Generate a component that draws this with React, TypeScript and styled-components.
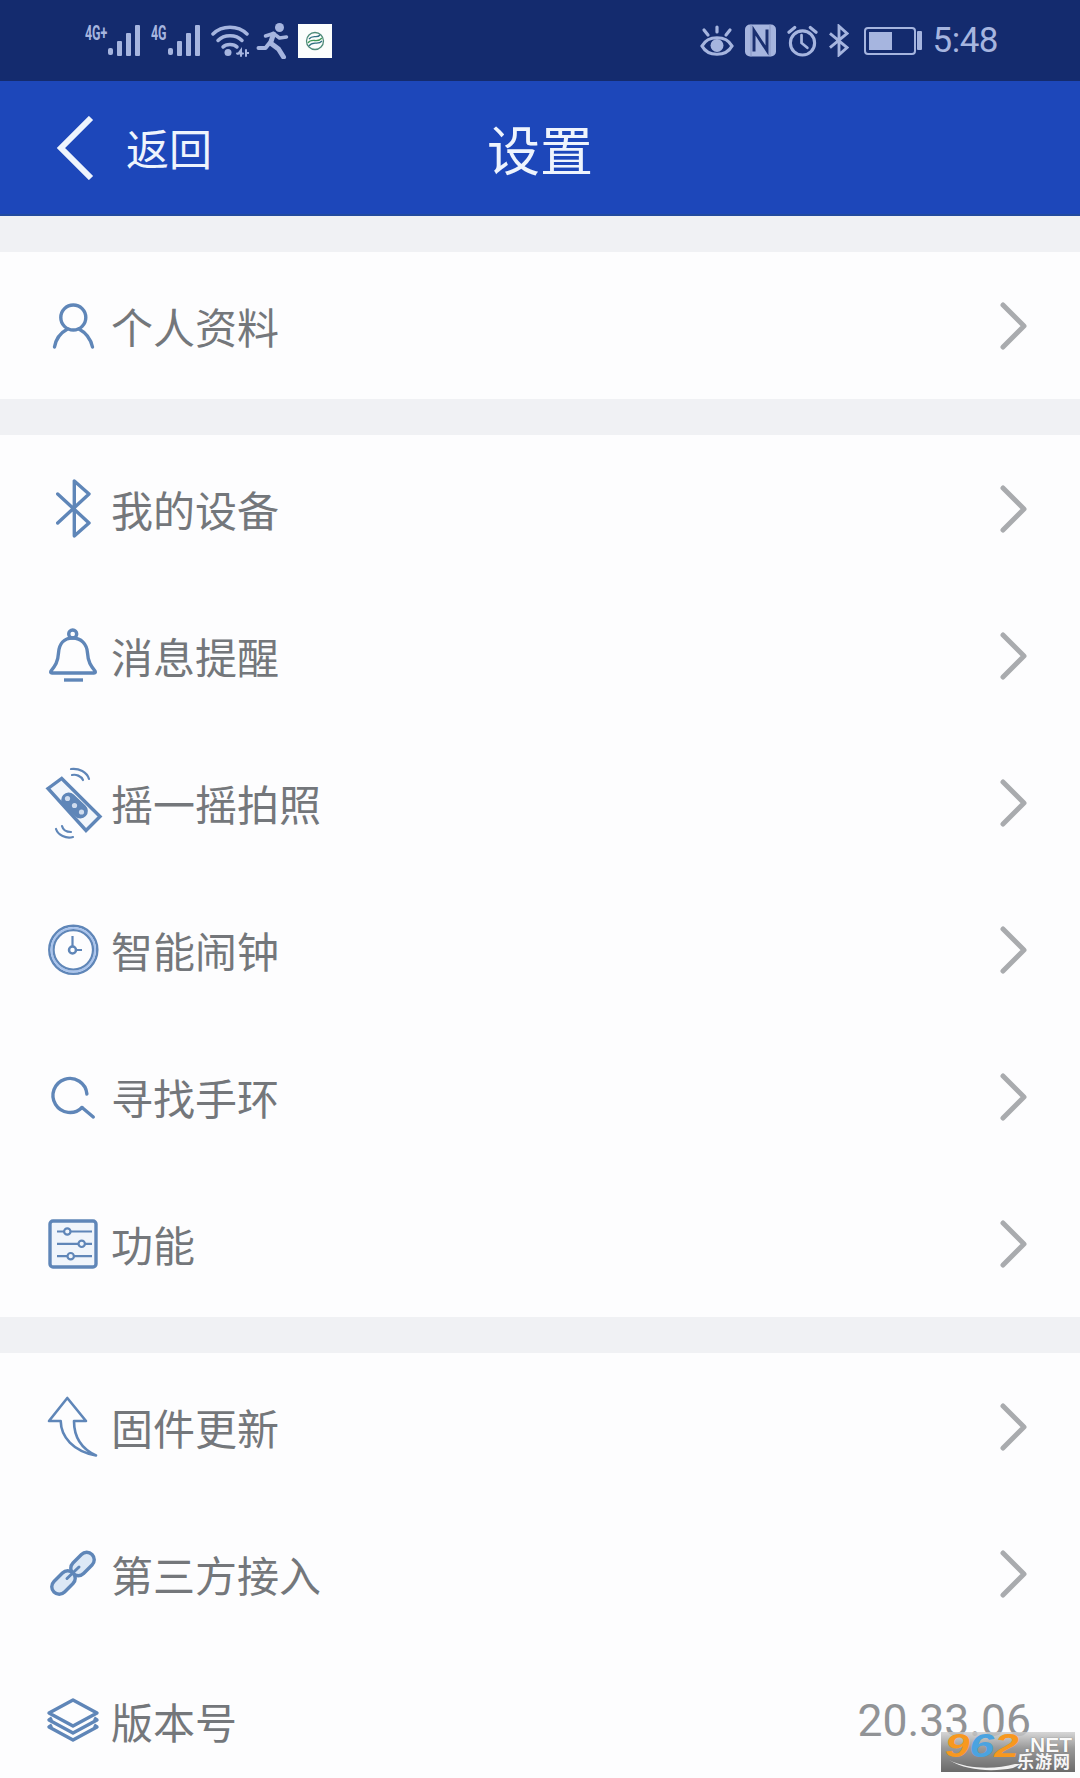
import { ReactNode } from 'react';
import styled, { createGlobalStyle } from 'styled-components';

const BLUE = '#5f86b8';
const PALE = '#a6b5df';

const GlobalStyle = createGlobalStyle`
  html, body {
    margin: 0;
    padding: 0;
    background: #f0f1f4;
  }
  * {
    box-sizing: border-box;
  }
`;

// status bar drawings
function Signal() {
  return (
    <svg width="33" height="31" viewBox="0 0 33 31" fill={PALE}>
      <rect x="0" y="23" width="5" height="7" rx="2" />
      <rect x="9" y="16" width="5" height="15" rx="1" />
      <rect x="18" y="8" width="5" height="23" rx="1" />
      <rect x="27" y="0" width="5" height="31" rx="1" />
    </svg>
  );
}

function Wifi() {
  return (
    <svg width="38" height="32" viewBox="0 0 38 32" fill="none" stroke={PALE} strokeWidth="3.500" strokeLinecap="round">
      <path d="M2 9 C11 0 27 0 36 9" />
      <path d="M7 15.500 C13 9 25 9 31 15.500" />
      <path d="M12 22 C15 18.500 23 18.500 26 22" />
      <circle cx="17" cy="27.500" r="3.500" fill={PALE} stroke="none" />
      <path d="M27 29 L30 25 V31 M26 28.500 H32 M35 25 V31 M35 28 L37.500 28" strokeWidth="2" />
    </svg>
  );
}

function Runner() {
  return (
    <svg width="35" height="36" viewBox="0 0 34 36" fill="none" stroke={PALE} strokeWidth="5" strokeLinecap="round" strokeLinejoin="round">
      <circle cx="23" cy="4.500" r="4.500" fill={PALE} stroke="none" />
      <path d="M9 13 L17 10.500 L23 15 L30 14" strokeWidth="3.500" />
      <path d="M17 11 L14 20 L22 26 L27 34" strokeWidth="5" />
      <path d="M13 20 L9 25 L2 25" strokeWidth="4" />
    </svg>
  );
}

function MobileLogo() {
  return (
    <svg width="20" height="20" viewBox="0 0 20 20" fill="none" stroke="#4d8a78" strokeWidth="1.300">
      <circle cx="10" cy="10" r="8.500" />
      <path d="M3 12 C7 6 12 13 17 7" stroke="#3f9a5a" />
      <path d="M4 15 C8 9 13 15 17 10" stroke="#2f6f80" />
      <path d="M4 8 C8 3 12 8 15 4" stroke="#2f6f80" />
    </svg>
  );
}

function Eye() {
  return (
    <svg width="34" height="32" viewBox="0 0 34 32" fill="none" stroke={PALE} strokeWidth="3.200" strokeLinecap="round">
      <path d="M2 21 C8 10 26 10 32 21 C26 32 8 32 2 21 Z" />
      <circle cx="17" cy="20.500" r="6.500" fill={PALE} stroke="none" />
      <path d="M17 2 V7 M4 5 L8 10 M30 5 L26 10" />
    </svg>
  );
}

function Nfc() {
  return (
    <svg width="31" height="33" viewBox="0 0 31 32">
      <rect x="0" y="0" width="31" height="32" rx="5" fill={PALE} />
      <path d="M9 27 V6 L22 26 V5" fill="none" stroke="#1a2f70" strokeWidth="3" />
      <path d="M6 0 V32 M25 0 V32" fill="none" stroke="#8796c4" strokeWidth="1" />
    </svg>
  );
}

function Alarm() {
  return (
    <svg width="31" height="32" viewBox="0 0 32 32" fill="none" stroke={PALE} strokeWidth="3.200" strokeLinecap="round">
      <circle cx="16" cy="18" r="12.500" />
      <path d="M15 10 V18 L21 23" strokeWidth="2.800" />
      <path d="M2 7 L8 2 M30 7 L24 2" />
    </svg>
  );
}

function StatusBluetooth() {
  return (
    <svg width="20" height="33" viewBox="0 0 21 33" fill="none" stroke={PALE} strokeWidth="3">
      <path d="M1 24 L19 9 L10.500 1.500 V31.500 L19 24 L1 9" />
    </svg>
  );
}

// list drawings, all on a 50x60 box around the row's middle
const icons: Record<string, ReactNode> = {
  person: (
    <>
      <circle cx="25.300" cy="21.500" r="12.500" />
      <path d="M6.500 51 C8 42 14 36 19.500 33 M44.500 51 C42.500 42 36.500 36 31 33" strokeLinecap="round" />
    </>
  ),
  bluetooth: <path d="M9.700 44 L41 15 L26.300 2 V57 L41 44 L9.700 15" strokeLinecap="round" strokeLinejoin="round" />,
  bell: (
    <>
      <circle cx="24.700" cy="8" r="4" />
      <path d="M24.700 12 C16 12 11 18 10.500 27 C10 36 7 40 3 45 Q2 47 4 47 H46 Q48 47 47 45 C43 40 40 36 39.500 27 C39 18 33 12 24.700 12 Z" />
      <path d="M16 54 H35" />
    </>
  ),
  band: (
    <>
      <path d="M0 15.500 L13.700 5.500 L52 43.500 L38 57.500 Z" fill="#f2f6fb" />
      <rect x="11" y="25" width="31" height="15" rx="7.500" transform="rotate(43 26.500 32.500)" fill={BLUE} stroke="none" />
      <circle cx="19.500" cy="25.500" r="2.600" fill="#cfdcee" stroke="none" />
      <circle cx="26.500" cy="32.500" r="2.600" fill="#cfdcee" stroke="none" />
      <circle cx="33.500" cy="39" r="2.600" fill="#cfdcee" stroke="none" />
      <path d="M23 -4 C31 -5 39 -1 41 6 M24 2 C28 1 33 3 35 7" strokeWidth="2.200" strokeLinecap="round" />
      <path d="M8 56 C10 62 18 66 25 64 M14 53 C15 57 19 59 23 59" strokeWidth="2.200" strokeLinecap="round" />
    </>
  ),
  clock: (
    <>
      <circle cx="25.300" cy="29.800" r="24" strokeWidth="2.500" />
      <circle cx="25.300" cy="29.800" r="21.800" stroke="#a9c4ee" strokeWidth="2" />
      <circle cx="25.300" cy="29.800" r="19.700" strokeWidth="2.200" />
      <path d="M24.500 16 V30 H34" strokeWidth="2.200" />
      <circle cx="24.500" cy="30" r="3.500" fill="#fdfdfe" strokeWidth="2.500" />
    </>
  ),
  search: (
    <>
      <path d="M38.900 27 A17 17 0 1 0 34 40.500" strokeLinecap="round" />
      <path d="M34 40.500 L45.300 50" strokeLinecap="round" />
    </>
  ),
  sliders: (
    <>
      <rect x="2" y="7" width="46" height="46" rx="3" fill="#f0f5fb" />
      <path d="M9 17.500 H44 M9 29.800 H44 M9 42.200 H44" strokeWidth="2.200" />
      <circle cx="19.300" cy="17.500" r="3.200" fill="#f0f5fb" strokeWidth="2.200" />
      <circle cx="33.700" cy="29.800" r="3.200" fill="#f0f5fb" strokeWidth="2.200" />
      <circle cx="22.700" cy="42.200" r="3.200" fill="#f0f5fb" strokeWidth="2.200" />
    </>
  ),
  update: (
    <path
      d="M19.300 1 L1 24 H12.700 C13 40 25 54 48 58.500 C34 52 26 40 26 24 H38 Z"
      strokeWidth="2.600"
      strokeLinejoin="round"
    />
  ),
  link: (
    <>
      <rect x="21" y="12.500" width="27" height="15" rx="7.500" transform="rotate(-45 34.500 20)" fill="#dce8f6" />
      <rect x="2" y="31" width="27" height="15" rx="7.500" transform="rotate(-45 15.500 38.500)" fill="#dce8f6" />
      <path d="M19 34.500 L31 23" strokeWidth="3" strokeLinecap="round" />
    </>
  ),
  layers: (
    <>
      <path d="M25 9 L49 22 L25 35 L1 22 Z" strokeLinejoin="round" />
      <path d="M4 27 L1 29 L25 42 L49 29 L46 27" strokeLinejoin="round" />
      <path d="M4 34 L1 36 L25 49 L49 36 L46 34" strokeLinejoin="round" />
    </>
  ),
};

function Chevron() {
  return (
    <svg width="27" height="48" viewBox="0 0 27 48" fill="none" stroke="#a9abae" strokeWidth="5" strokeLinecap="round" strokeLinejoin="round">
      <path d="M3 3 L24 24 L3 45" />
    </svg>
  );
}

type RowData = { icon: string; label: string; value?: string };

const sections: RowData[][] = [
  [{ icon: 'person', label: '个人资料' }],
  [
    { icon: 'bluetooth', label: '我的设备' },
    { icon: 'bell', label: '消息提醒' },
    { icon: 'band', label: '摇一摇拍照' },
    { icon: 'clock', label: '智能闹钟' },
    { icon: 'search', label: '寻找手环' },
    { icon: 'sliders', label: '功能' },
  ],
  [
    { icon: 'update', label: '固件更新' },
    { icon: 'link', label: '第三方接入' },
    { icon: 'layers', label: '版本号', value: '20.33.06' },
  ],
];

function App() {
  return (
    <Page>
      <GlobalStyle />
      <StatusBar>
        <StatusLeft>
          <NetGroup>
            <NetLabel $width={23}>4G+</NetLabel>
            <Signal />
          </NetGroup>
          <NetGroup>
            <NetLabel $width={17}>4G</NetLabel>
            <Signal />
          </NetGroup>
          <Wifi />
          <Runner />
          <LogoTile>
            <MobileLogo />
          </LogoTile>
        </StatusLeft>
        <StatusRight>
          <Eye />
          <Nfc />
          <Alarm />
          <StatusBluetooth />
          <Battery>
            <BatteryFill />
          </Battery>
          <BatteryCap />
          <Clock>5:48</Clock>
        </StatusRight>
      </StatusBar>

      <Header>
        <BackLink>
          <svg width="38" height="64" viewBox="0 0 38 64" fill="none" stroke="#eef4fd" strokeWidth="6">
            <path d="M35 2 L5 32 L35 62" />
          </svg>
          <BackText>返回</BackText>
        </BackLink>
        <Title>设置</Title>
      </Header>

      {sections.map((rows, i) => (
        <Section key={i}>
          {rows.map((row) => (
            <Row key={row.label}>
              <RowIcon viewBox="0 0 50 60">{icons[row.icon]}</RowIcon>
              <RowLabel>{row.label}</RowLabel>
              {row.value ? <RowValue>{row.value}</RowValue> : <Chevron />}
            </Row>
          ))}
        </Section>
      ))}

      <Watermark>
        <WatermarkBrand>
          <Digit>9</Digit>
          <Digit $blue>6</Digit>
          <Digit>2</Digit>
        </WatermarkBrand>
        <WatermarkNet>.NET</WatermarkNet>
        <WatermarkCn>乐游网</WatermarkCn>
        <Swoosh viewBox="0 0 72 12">
          <path d="M0 1 C20 11 48 10 66 5 L72 5 L64 9 C44 13 18 12 0 1 Z" fill="#f1f1f1" />
        </Swoosh>
      </Watermark>
    </Page>
  );
}

export default App;

// styles
const Page = styled.div`
  position: relative;
  width: 1080px;
  height: 1778px;
  overflow: hidden;
  background: #f0f1f4;
  font-family: 'Noto Sans CJK SC', 'Liberation Sans', sans-serif;
`;

const StatusBar = styled.div`
  height: 81px;
  padding: 0 82px 0 85px;
  display: flex;
  align-items: center;
  justify-content: space-between;
  background: #142b6e;
`;

const StatusLeft = styled.div`
  display: flex;
  align-items: center;
  gap: 7px;
`;

const StatusRight = styled.div`
  display: flex;
  align-items: center;
  gap: 11px;
`;

const NetGroup = styled.div`
  display: flex;
  align-items: flex-start;
  margin-right: 3px;
`;

const NetLabel = styled.span<{ $width: number }>`
  width: ${(p) => p.$width}px;
  margin-top: -2px;
  color: ${PALE};
  font: 700 20px/20px 'Roboto', sans-serif;
  white-space: nowrap;
  transform: scaleX(0.62);
  transform-origin: left top;
`;

const LogoTile = styled.div`
  width: 34px;
  height: 34px;
  display: flex;
  align-items: center;
  justify-content: center;
  background: #fbfdfc;
`;

const Battery = styled.div`
  width: 52px;
  height: 28px;
  margin-left: 4px;
  padding: 3px;
  border: 2px solid ${PALE};
  border-radius: 4px;
`;

const BatteryFill = styled.div`
  width: 23px;
  height: 100%;
  background: ${PALE};
`;

const BatteryCap = styled.div`
  width: 5px;
  height: 19px;
  margin-left: -10px;
  background: ${PALE};
  border-radius: 1px;
`;

const Clock = styled.span`
  color: ${PALE};
  font: 400 35px/40px 'Roboto', sans-serif;
  letter-spacing: -0.5px;
`;

const Header = styled.div`
  height: 135px;
  display: grid;
  grid-template-columns: 1fr auto 1fr;
  align-items: center;
  padding: 0 56px;
  background: #1d47ba;
  border-bottom: 2px solid #234b9f;
`;

const BackLink = styled.div`
  display: flex;
  align-items: center;
  gap: 32px;
`;

const BackText = styled.span`
  margin-top: -2px;
  color: #eef4fd;
  font-size: 43px;
  line-height: 56px;
`;

const Title = styled.h1`
  margin: 0;
  color: #eef4fd;
  font-size: 53px;
  font-weight: 400;
  line-height: 70px;
`;

const Section = styled.div`
  margin-top: 36px;
  background: #fdfdfe;
`;

const Row = styled.div`
  height: 147px;
  padding: 0 53px 0 48px;
  display: flex;
  align-items: center;
`;

const RowIcon = styled.svg`
  width: 50px;
  height: 60px;
  flex-shrink: 0;
  overflow: visible;
  fill: none;
  stroke: ${BLUE};
  stroke-width: 3.4;
`;

const RowLabel = styled.span`
  flex: 1;
  margin-left: 13px;
  color: #74777b;
  font-size: 42px;
  font-weight: 400;
  line-height: 56px;
`;

const RowValue = styled.span`
  margin-right: -4px;
  color: #919396;
  font: 400 44.5px/58px 'Roboto', sans-serif;
`;

const Watermark = styled.div`
  position: absolute;
  left: 941px;
  top: 1732px;
  width: 134px;
  height: 40px;
  background: linear-gradient(180deg, rgba(205, 205, 205, 0.8) 0%, #9a9a9a 40%, #6a6a6a 100%);
`;

const WatermarkBrand = styled.div`
  position: absolute;
  left: 4px;
  top: -3px;
  display: flex;
  font: italic 700 33px/34px 'Liberation Sans', sans-serif;
  transform: scaleX(1.34);
  transform-origin: left top;
`;

const Digit = styled.span<{ $blue?: boolean }>`
  color: ${(p) => (p.$blue ? '#4ba3e0' : '#f7981f')};
`;

const WatermarkNet = styled.span`
  position: absolute;
  right: 3px;
  top: 1px;
  color: #fafafa;
  font: 700 21px/24px 'Liberation Sans', sans-serif;
  text-shadow: 0 0 1px #555555;
`;

const WatermarkCn = styled.span`
  position: absolute;
  right: 4px;
  bottom: 1px;
  color: #f6f6f6;
  font-size: 17px;
  font-weight: 700;
  line-height: 20px;
  letter-spacing: 1px;
`;

const Swoosh = styled.svg`
  position: absolute;
  left: 8px;
  top: 27px;
  width: 72px;
  height: 12px;
`;
